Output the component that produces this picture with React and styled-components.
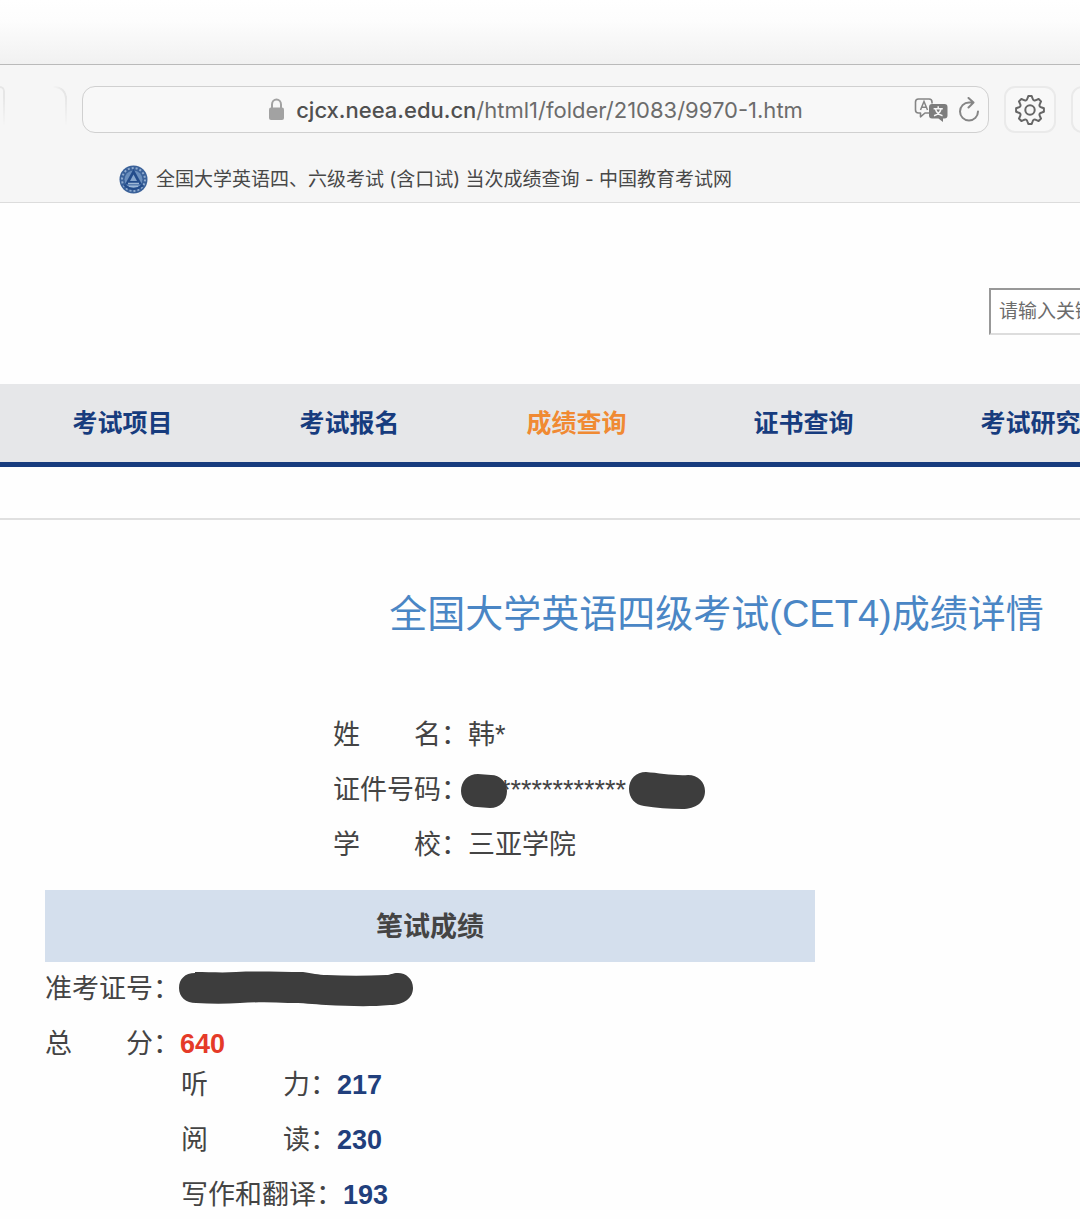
import React from 'react';
import styled, { createGlobalStyle } from 'styled-components';

const palette = {
  navy: '#173c7e',
  orange: '#f08a33',
  blue: '#4a86c5',
  red: '#e53a28',
  text: '#444444',
  ink: '#3d3d3d',
  chrome: '#f6f6f6',
  line: '#dcdcdc',
};

const GlobalStyle = createGlobalStyle`
  * {
    box-sizing: border-box;
  }
  body {
    margin: 0;
    background: #fefefe;
    color: ${palette.text};
    font-family: "Liberation Sans", "Noto Sans CJK SC", sans-serif;
  }
  button {
    margin: 0;
    padding: 0;
    border: none;
    background: none;
    font: inherit;
    color: inherit;
  }
`;

const Page = styled.div`
  overflow: hidden;
`;

/* browser window */

const WindowShadow = styled.div`
  height: 65px;
  background: linear-gradient(#ffffff 0, #fdfdfd 20px, #f1f1f1 64px);
  border-bottom: 1px solid #bababa;
`;

const BrowserBar = styled.header`
  background: ${palette.chrome};
  border-bottom: 1px solid ${palette.line};
  padding-top: 21px;
`;

const Toolbar = styled.div`
  display: flex;
  gap: 15px;
  height: 47px;
  margin-right: -43px;
`;

const TabEdge = styled.div`
  width: ${({ $width }) => $width}px;
  border: 2px solid #e6e6e6;
  border-left: none;
  border-bottom: none;
  border-top-right-radius: 12px;
  mask-image: radial-gradient(ellipse 14px 40px at top right, #000 30%, transparent);
`;

const AddressBar = styled.div`
  flex: 1;
  display: grid;
  grid-template-columns: 1fr auto 1fr;
  align-items: center;
  padding: 0 8px;
  border: 1px solid #d0d0d0;
  border-radius: 13px;
  background: #f8f8f8;
`;

const UrlButton = styled.button`
  grid-column: 2;
  display: flex;
  align-items: center;
  gap: 11px;
  font-family: Inter, sans-serif;
  font-size: 22px;
  line-height: 30px;
  color: #6c6c6c;
  white-space: nowrap;
  b {
    font-weight: 500;
    color: #505050;
  }
`;

const AddressActions = styled.div`
  display: flex;
  justify-content: flex-end;
  align-items: center;
  gap: 10px;
  svg {
    display: block;
  }
`;

const ToolButton = styled.button`
  width: 52px;
  display: flex;
  align-items: center;
  justify-content: center;
  border: 2px solid #eaeaea;
  border-radius: 11px;
  background: #f8f8f8;
`;

const TabTitle = styled.div`
  display: flex;
  align-items: center;
  gap: 8px;
  padding: 31px 0 6px 119px;
  font-family: Inter, "Noto Sans CJK SC", sans-serif;
  font-size: 19px;
  line-height: 32px;
  color: #484848;
  white-space: nowrap;
  svg {
    margin-bottom: 2px;
  }
`;

/* site header */

const SearchArea = styled.div`
  display: flex;
  justify-content: flex-end;
  padding: 85px 0 49px;
  margin-right: -260px;
`;

const SearchInput = styled.input`
  width: 351px;
  height: 47px;
  padding: 0 8px;
  border: 2px solid;
  border-color: #989898 #dddddd #dddddd #989898;
  background: #ffffff;
  font-family: "Liberation Sans", "Noto Sans CJK SC", sans-serif;
  font-size: 19px;
  outline: none;
  &::placeholder {
    color: #6c6c6c;
  }
`;

const Nav = styled.nav`
  display: flex;
  padding-left: 9px;
  background: #e6e7e9;
  border-bottom: 5px solid ${palette.navy};
`;

const NavLink = styled.a`
  flex: none;
  width: 227px;
  line-height: 78px;
  text-align: center;
  text-decoration: none;
  font-size: 25px;
  font-weight: bold;
  color: ${({ $active }) => ($active ? palette.orange : palette.navy)};
`;

const Divider = styled.hr`
  margin: 51px 0 0;
  border: none;
  border-top: 2px solid #e0e0e0;
`;

/* score report */

const Report = styled.main`
  padding: 64px 0 0 45px;
`;

const Title = styled.h1`
  margin: 0 -308px 64px 0;
  font-size: 38px;
  font-weight: normal;
  line-height: 60px;
  text-align: center;
  color: ${palette.blue};
  white-space: nowrap;
`;

const Rows = styled.dl`
  margin: ${({ $top }) => $top || 0}px 0 0 ${({ $indent }) => $indent || 0}px;
`;

const Row = styled.div`
  display: flex;
  align-items: center;
  height: 55px;
  font-size: 27px;
  line-height: 55px;
  white-space: pre;
`;

const Label = styled.dt``;

const Value = styled.dd`
  display: flex;
  align-items: center;
  margin: 0;
`;

const Score = styled.strong`
  color: ${({ $total }) => ($total ? palette.red : '#213f7c')};
`;

const SectionTitle = styled.h2`
  max-width: 770px;
  margin: 17px 0 0;
  padding-top: 2px;
  background: #d4dfed;
  font-size: 27px;
  line-height: 70px;
  text-align: center;
`;

const Scribble = styled.svg`
  position: relative;
  flex: none;
  margin: 0 -7px;
  fill: ${palette.ink};
`;

const LockIcon = () => (
  <svg width="17" height="23" viewBox="0 0 17 23" aria-hidden="true">
    <path d="M4 11V6.5a4.5 4.9 0 0 1 9 0V11" fill="none" stroke="#a2a2a2" strokeWidth="2" />
    <rect x="1" y="9.5" width="15" height="12.5" rx="2" fill="#a2a2a2" />
  </svg>
);

const TranslateIcon = () => (
  <svg width="34" height="26" viewBox="0 0 34 26" fill="none" aria-hidden="true">
    <path
      d="M15.5 16H11l-4.5 3.8V16h-2a3 3 0 0 1-3-3V5a3 3 0 0 1 3-3H15a3 3 0 0 1 3 3v1.5"
      stroke="#858585"
      strokeWidth="1.6"
      strokeLinejoin="round"
    />
    <path d="M6.5 13 10 4.5l3.5 8.5M7.7 10.3h4.6" stroke="#858585" strokeWidth="1.5" />
    <path
      d="M18 7h12.500a3 3 0 0 1 3 3v8.500a3 3 0 0 1-3 3H29V25l-4.600-3.500H18a3 3 0 0 1-3-3V10a3 3 0 0 1 3-3Z"
      fill="#7d7d7d"
    />
    <path
      d="M24.2 9.3v2.2M19.6 11.8h9.2M21.5 12c.8 3.2 3.6 5.7 7 6.7M27 12c-.8 3.2-3.6 5.7-7 6.7"
      stroke="#f6f6f6"
      strokeWidth="1.5"
    />
  </svg>
);

const ReloadIcon = () => (
  <svg width="22" height="26" viewBox="0 0 22 26" fill="none" stroke="#858585" aria-hidden="true">
    <path
      d="M20 14.5A9 9 0 1 1 11 5.500h4M10.500 1l5 4.600-5 4.900"
      strokeWidth="2"
      strokeLinecap="round"
      strokeLinejoin="round"
    />
  </svg>
);

const point = (radius, degrees) => {
  const a = (degrees * Math.PI) / 180;
  return `${(16 + radius * Math.sin(a)).toFixed(2)} ${(16 - radius * Math.cos(a)).toFixed(2)}`;
};

// eight teeth, each followed by a rounded valley
const gearPath =
  [0, 45, 90, 135, 180, 225, 270, 315]
    .map((t, i) =>
      [
        `${i ? 'L' : 'M'}${point(14, t - 7)}`,
        `L${point(14, t + 7)}`,
        `L${point(12, t + 12)}`,
        `Q${point(9, t + 22.5)} ${point(12, t + 33)}`,
      ].join('')
    )
    .join('') + 'Z';

const GearIcon = () => (
  <svg width="32" height="32" viewBox="0 0 32 32" fill="none" stroke="#666666" aria-hidden="true">
    <path d={gearPath} strokeWidth="2" strokeLinejoin="round" />
    <circle cx="16" cy="16" r="4.7" strokeWidth="2" />
  </svg>
);

const SiteLogo = () => (
  <svg width="29" height="29" viewBox="0 0 29 29" fill="none" aria-hidden="true">
    <circle cx="14.5" cy="14.5" r="14" fill="#3a6199" />
    <circle cx="14.5" cy="14.5" r="11.5" stroke="#8fabcf" strokeWidth="2" strokeDasharray="2 2" />
    <circle cx="14.5" cy="14.5" r="9" fill="#6b8fbd" />
    <path d="M14.5 4 23 19.5H6Z" fill="#234c8b" />
    <path d="M14.5 9.5 18 16h-7Z" fill="#86a6cd" />
    <path d="M9 18.5h11M10 21.5h9" stroke="#9db7d6" strokeWidth="1.5" />
    <path d="M5 20q9.500 8 19 0" stroke="#234c8b" strokeWidth="2" />
  </svg>
);

const menus = ['考试项目', '考试报名', '成绩查询', '证书查询', '考试研究'];

const scores = [
  { label: '听\u00a0\u00a0\u00a0\u00a0\u00a0\u00a0\u00a0\u00a0\u00a0\u00a0力：', score: 217 },
  { label: '阅\u00a0\u00a0\u00a0\u00a0\u00a0\u00a0\u00a0\u00a0\u00a0\u00a0读：', score: 230 },
  { label: '写作和翻译：', score: 193 },
];

const App = () => {
  return (
    <Page lang="zh-CN">
      <GlobalStyle />
      <WindowShadow />
      <BrowserBar>
        <Toolbar>
          <TabEdge $width={5} />
          <TabEdge $width={47} />
          <AddressBar>
            <UrlButton type="button">
              <LockIcon />
              <span>
                <b>cjcx.neea.edu.cn</b>/html1/folder/21083/9970-1.htm
              </span>
            </UrlButton>
            <AddressActions>
              <button type="button" aria-label="翻译">
                <TranslateIcon />
              </button>
              <button type="button" aria-label="重新载入">
                <ReloadIcon />
              </button>
            </AddressActions>
          </AddressBar>
          <ToolButton type="button" aria-label="设置">
            <GearIcon />
          </ToolButton>
          <ToolButton type="button" aria-label="更多" />
        </Toolbar>
        <TabTitle>
          <SiteLogo />
          <span>全国大学英语四、六级考试 (含口试) 当次成绩查询 - 中国教育考试网</span>
        </TabTitle>
      </BrowserBar>

      <SearchArea>
        <SearchInput type="text" aria-label="关键字" placeholder="请输入关键字" />
      </SearchArea>
      <Nav>
        {menus.map((menu) => (
          <NavLink key={menu} href="#" $active={menu === '成绩查询'}>
            {menu}
          </NavLink>
        ))}
      </Nav>
      <Divider />

      <Report>
        <Title>全国大学英语四级考试(CET4)成绩详情</Title>
        <Rows $indent={288}>
          <Row>
            <Label>姓&emsp;&emsp;名：</Label>
            <Value>韩*</Value>
          </Row>
          <Row>
            <Label>证件号码：</Label>
            <Value>
              <Scribble width="46" height="36" viewBox="0 0 46 36" aria-hidden="true">
                <path d="M17 1C7 1 0 8 0 18c0 9 7 16 16 16l13 1c10 0 17-7 17-17C46 9 39 2 30 2Z" />
              </Scribble>
              <span>************</span>
              <Scribble width="93" height="38" viewBox="-10 0 93 38" aria-hidden="true">
                <path d="M17 0C7 0 0 7 0 17c0 9 6 16 15 17 12 2 25 3 38 3 14 0 23-7 23-18 0-9-7-16-17-16-13 1-29-2-42-3Z" />
              </Scribble>
            </Value>
          </Row>
          <Row>
            <Label>学&emsp;&emsp;校：</Label>
            <Value>三亚学院</Value>
          </Row>
        </Rows>

        <SectionTitle>笔试成绩</SectionTitle>
        <Rows>
          <Row>
            <Label>准考证号：</Label>
            <Value>
              <Scribble width="248" height="40" viewBox="-6 -2 248 40" aria-hidden="true">
                <path d="M16 1C6 1 0 7 0 16s7 15 17 15c15 1 30 1 44 0 16-1 32-1 48 0 15 0 25 1 38 2 23 1 42 2 64 0 14 0 23-7 23-17 0-9-7-15-15-15-6 0-7 2-12 2-20 1-40 1-59 0-9 0-15-2-24-3-22 0-46-1-67 0-14 1-27 0-41 0Z" />
              </Scribble>
            </Value>
          </Row>
          <Row>
            <Label>总&emsp;&emsp;分：</Label>
            <Value>
              <Score $total>640</Score>
            </Value>
          </Row>
        </Rows>
        <Rows $top={-14} $indent={136}>
          {scores.map(({ label, score }) => (
            <Row key={label}>
              <Label>{label}</Label>
              <Value>
                <Score>{score}</Score>
              </Value>
            </Row>
          ))}
        </Rows>
      </Report>
    </Page>
  );
};

export default App;
